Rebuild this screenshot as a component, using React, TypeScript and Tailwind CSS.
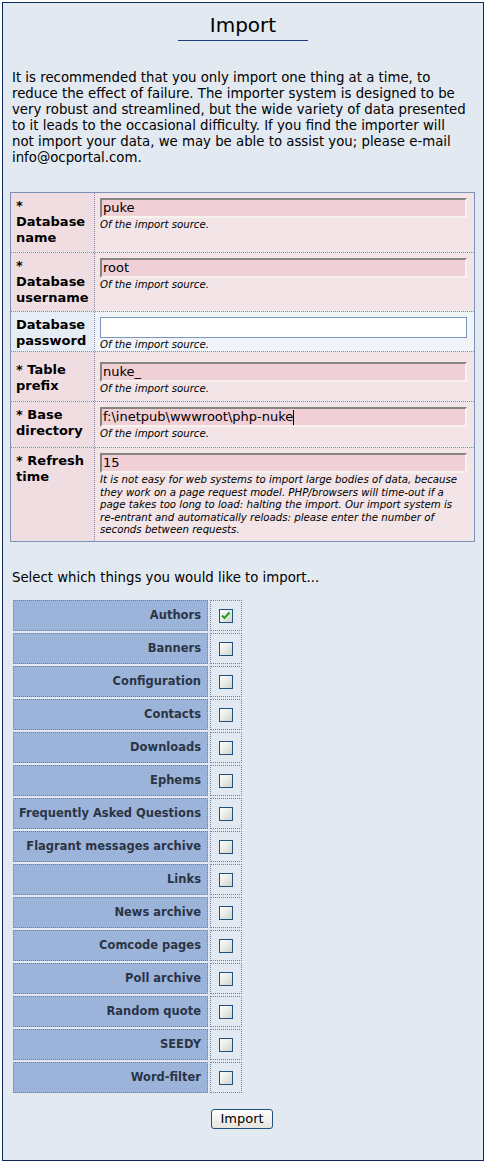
import React from 'react';

interface FieldRow {
    label: React.ReactNode;
    value: string;
    required: boolean;
    rowClass: string;
    padClass: string;
    caret?: boolean;
    description: React.ReactNode;
}

const FONT = "font-['DejaVu_Sans','Liberation_Sans',sans-serif]";

const rows: FieldRow[] = [
    { label: <>*<br />Database<br />name</>, value: 'puke', required: true, rowClass: 'h-[59px]', padClass: 'pt-[5px]', description: 'Of the import source.' },
    { label: <>*<br />Database<br />username</>, value: 'root', required: true, rowClass: 'h-[59px]', padClass: 'pt-[5px]', description: 'Of the import source.' },
    { label: <>Database<br />password</>, value: '', required: false, rowClass: 'h-[40px]', padClass: 'pt-[5px]', description: 'Of the import source.' },
    { label: <>* Table<br />prefix</>, value: 'nuke_', required: true, rowClass: 'h-[50px]', padClass: 'pt-[10px]', description: 'Of the import source.' },
    { label: <>* Base<br />directory</>, value: 'f:\\inetpub\\wwwroot\\php-nuke', required: true, rowClass: 'h-[46px]', padClass: 'pt-[5px]', caret: true, description: 'Of the import source.' },
    {
        label: <>* Refresh<br />time</>, value: '15', required: true, rowClass: 'h-[94px]', padClass: 'pt-[5px]',
        description: (
            <>
                It is not easy for web systems to import large bodies of data, because<br />
                they work on a page request model. PHP/browsers will time-out if a<br />
                page takes too long to load: halting the import. Our import system is<br />
                re-entrant and automatically reloads: please enter the number of<br />
                seconds between requests.
            </>
        ),
    },
];

const importables = [
    'Authors', 'Banners', 'Configuration', 'Contacts', 'Downloads', 'Ephems',
    'Frequently Asked Questions', 'Flagrant messages archive', 'Links', 'News archive',
    'Comcode pages', 'Poll archive', 'Random quote', 'SEEDY', 'Word-filter',
];

const Checkbox = ({ checked }: { checked: boolean }) => (
    <div className="w-[14px] h-[14px] border border-[#1c5180] bg-gradient-to-br from-white to-[#d4d4cc] flex items-center justify-center">
        {checked && (
            <svg width="10" height="9" viewBox="0 0 10 9">
                <path d="M1 4.5 L3.5 7 L8.5 1.5" stroke="#21a121" strokeWidth="2" fill="none" />
            </svg>
        )}
    </div>
);

export default function App() {
    return (
        <div className={`bg-white p-[2px] ${FONT} text-[13px] text-black`}>
            <div className="w-[482px] h-[1159px] border border-[#0e2a5c] bg-[#e2e9f1] pl-[7px] pr-[7px]">
                {/* Title */}
                <div className="flex justify-center pt-[9px]">
                    <h1 className="w-[130px] text-center text-[20px] leading-[27px] border-b border-[#1a3d7c] pb-[1px]">Import</h1>
                </div>

                {/* Intro */}
                <p className="mt-[29px] pl-[2px] text-[13.3px] leading-[16px] whitespace-nowrap">
                    It is recommended that you only import one thing at a time, to<br />
                    reduce the effect of failure. The importer system is designed to be<br />
                    very robust and streamlined, but the wide variety of data presented<br />
                    to it leads to the occasional difficulty. If you find the importer will<br />
                    not import your data, we may be able to assist you; please e-mail<br />
                    info@ocportal.com.
                </p>

                {/* Fields */}
                <div className="mt-[26px] w-[465px] border border-[#7a92b8]">
                    {rows.map((row, i) => (
                        <div
                            key={i}
                            className={`flex ${row.rowClass} ${i > 0 ? 'border-t border-dotted border-[#8a8aab]' : ''}`}
                        >
                            <div className={`w-[84px] shrink-0 pl-[5px] ${row.padClass} font-bold leading-[16px] border-r border-dotted border-[#8a8aab] ${row.required ? 'bg-[#efdde2]' : 'bg-[#e7edf4]'}`}>
                                {row.label}
                            </div>
                            <div className={`flex-1 pl-[5px] pr-[7px] ${row.padClass} ${row.required ? 'bg-[#f2e4e7]' : 'bg-[#f0f4f9]'}`}>
                                {row.required ? (
                                    <div className="h-[20px] bg-[#f0cfd6] border-t-2 border-l-2 border-t-[#85857e] border-l-[#85857e] border-r-2 border-b-2 border-r-[#f7f2ec] border-b-[#f7f2ec] pl-[1px] leading-[16px] flex items-center">
                                        <span>{row.value}</span>
                                        {row.caret && <span className="w-px h-[15px] bg-black" />}
                                    </div>
                                ) : (
                                    <div className="h-[21px] bg-white border border-[#7b97bd]" />
                                )}
                                <div className="italic text-[10.2px] leading-[12.5px] mt-[1px] whitespace-nowrap">{row.description}</div>
                            </div>
                        </div>
                    ))}
                </div>

                <p className="mt-[28px] pl-[2px] text-[13.3px] leading-[16px]">Select which things you would like to import...</p>

                {/* Importables */}
                <div className="mt-[14px] ml-[3px] flex flex-col gap-[2px]">
                    {importables.map((name, i) => (
                        <div key={name} className="flex gap-[2px] h-[31px]">
                            <div className="w-[195px] bg-[#9cb4da] border border-dotted border-[#6a7fa3] flex items-center justify-end pr-[6px] font-bold text-[11.5px] text-[#2b3445]">
                                {name}
                            </div>
                            <div className="w-[32px] border border-dotted border-[#6a7fa3] flex items-center justify-center">
                                <Checkbox checked={i === 0} />
                            </div>
                        </div>
                    ))}
                </div>

                <div className="flex justify-center mt-[16px] pr-[2px]">
                    <button className="w-[62px] h-[20px] rounded-[3px] border border-[#1c5180] bg-gradient-to-b from-white to-[#e4e4dc] text-[13px] leading-[16px]">
                        Import
                    </button>
                </div>
            </div>
        </div>
    );
}
